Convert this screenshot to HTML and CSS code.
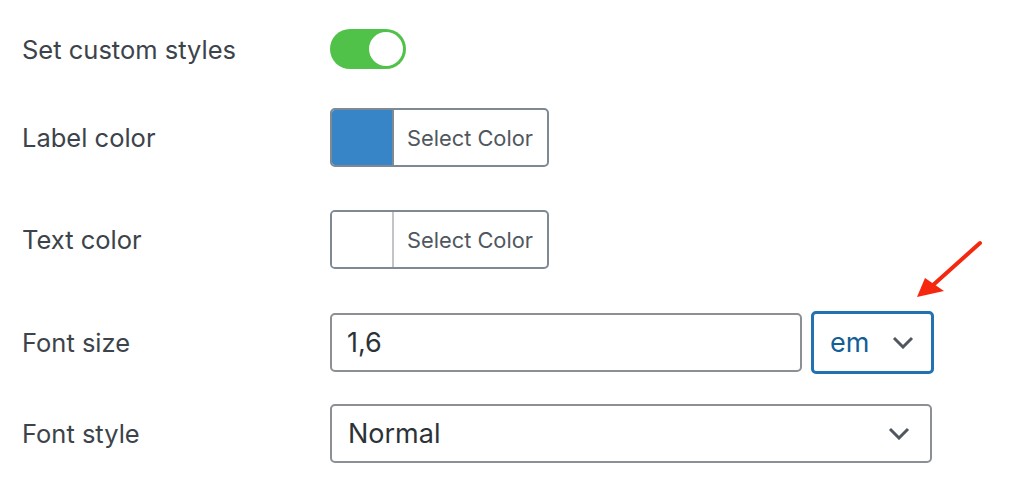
FILE: index.html
```html
<!DOCTYPE html>
<html>
<head>
<meta charset="utf-8">
<link rel="stylesheet" href="styles.css">
</head>
<body>
<div class="form">
  <div class="row row-toggle">
    <div class="label">Set custom styles</div>
    <div class="control"><span class="toggle"><span class="knob"></span></span></div>
  </div>
  <div class="row row-label">
    <div class="label">Label color</div>
    <div class="control"><button class="color-btn"><span class="swatch swatch-blue"></span><span class="color-text">Select Color</span></button></div>
  </div>
  <div class="row row-text">
    <div class="label">Text color</div>
    <div class="control"><button class="color-btn"><span class="swatch swatch-white"></span><span class="color-text">Select Color</span></button></div>
  </div>
  <div class="row row-size">
    <div class="label">Font size</div>
    <div class="control size-control">
      <div class="input">1,6</div>
      <div class="select unit"><span>em</span>
        <svg class="chev" width="22" height="13" viewBox="0 0 22 13"><path d="M2 2 L11 11 L20 2" fill="none" stroke="#50575e" stroke-width="3"/></svg>
      </div>
    </div>
  </div>
  <div class="row row-style">
    <div class="label">Font style</div>
    <div class="control">
      <div class="select style-select"><span>Normal</span>
        <svg class="chev" width="22" height="13" viewBox="0 0 22 13"><path d="M2 2 L11 11 L20 2" fill="none" stroke="#50575e" stroke-width="3"/></svg>
      </div>
    </div>
  </div>
</div>
<svg class="arrow" width="80" height="70" viewBox="0 0 80 70">
  <line x1="70" y1="3" x2="22" y2="46" stroke="#f5280f" stroke-width="4" stroke-linecap="round"/>
  <polygon points="7,57 15,38 34,51" fill="#f5280f"/>
</svg>
</body>
</html>
```
FILE: styles.css
```css
html, body {
  margin: 0;
  padding: 0;
  background: #ffffff;
}
body {
  font-family: "Inter", "Noto Sans", sans-serif;
  color: #3c434a;
  position: relative;
  width: 1030px;
  height: 488px;
  overflow: hidden;
}
.form {
  padding-left: 22px;
  display: flex;
  flex-direction: column;
}
.row {
  display: grid;
  grid-template-columns: 308px auto;
  align-items: center;
}
.label {
  font-size: 25.5px;
  color: #3c434a;
}
.row-toggle { margin-top: 29px; }
.row-label { margin-top: 39px; }
.row-text { margin-top: 43px; }
.row-size { margin-top: 42px; }
.row-style { margin-top: 30px; }

.toggle {
  display: flex;
  justify-content: flex-end;
  align-items: center;
  width: 76px;
  height: 40px;
  border-radius: 20px;
  background: #50c24a;
  padding: 0 3px;
  box-sizing: border-box;
}
.knob {
  width: 34px;
  height: 34px;
  border-radius: 50%;
  background: #ffffff;
}

.color-btn {
  display: flex;
  align-items: stretch;
  width: 219px;
  height: 59px;
  padding: 0;
  border: 2px solid #7e8993;
  border-radius: 5px;
  background: #ffffff;
  overflow: hidden;
  font-family: inherit;
}
.swatch {
  width: 60px;
  border-right: 2px solid #c3c4c7;
}
.swatch-blue { background: #3785c6; border-right-color: #7e8993; }
.swatch-white { background: #ffffff; }
.color-text {
  flex: 1;
  display: flex;
  align-items: center;
  padding-left: 13px;
  font-size: 21.8px;
  color: #50575e;
}

.size-control {
  display: flex;
  align-items: center;
  gap: 9px;
}
.input {
  width: 472px;
  height: 59px;
  box-sizing: border-box;
  border: 2px solid #8c8f94;
  border-radius: 5px;
  display: flex;
  align-items: center;
  padding-left: 15px;
  font-size: 27px;
  color: #2c3338;
}
.select {
  display: flex;
  align-items: center;
  justify-content: space-between;
  box-sizing: border-box;
  border-radius: 5px;
  font-size: 27px;
  color: #2c3338;
}
.unit {
  width: 123px;
  height: 63px;
  border: 3px solid #2271b1;
  padding: 0 17px 0 16px;
  color: #135e96;
}
.style-select {
  width: 602px;
  height: 59px;
  border: 2px solid #8c8f94;
  padding: 0 20px 0 16px;
}
.chev { display: block; }

.arrow {
  position: absolute;
  left: 910px;
  top: 240px;
}
```
